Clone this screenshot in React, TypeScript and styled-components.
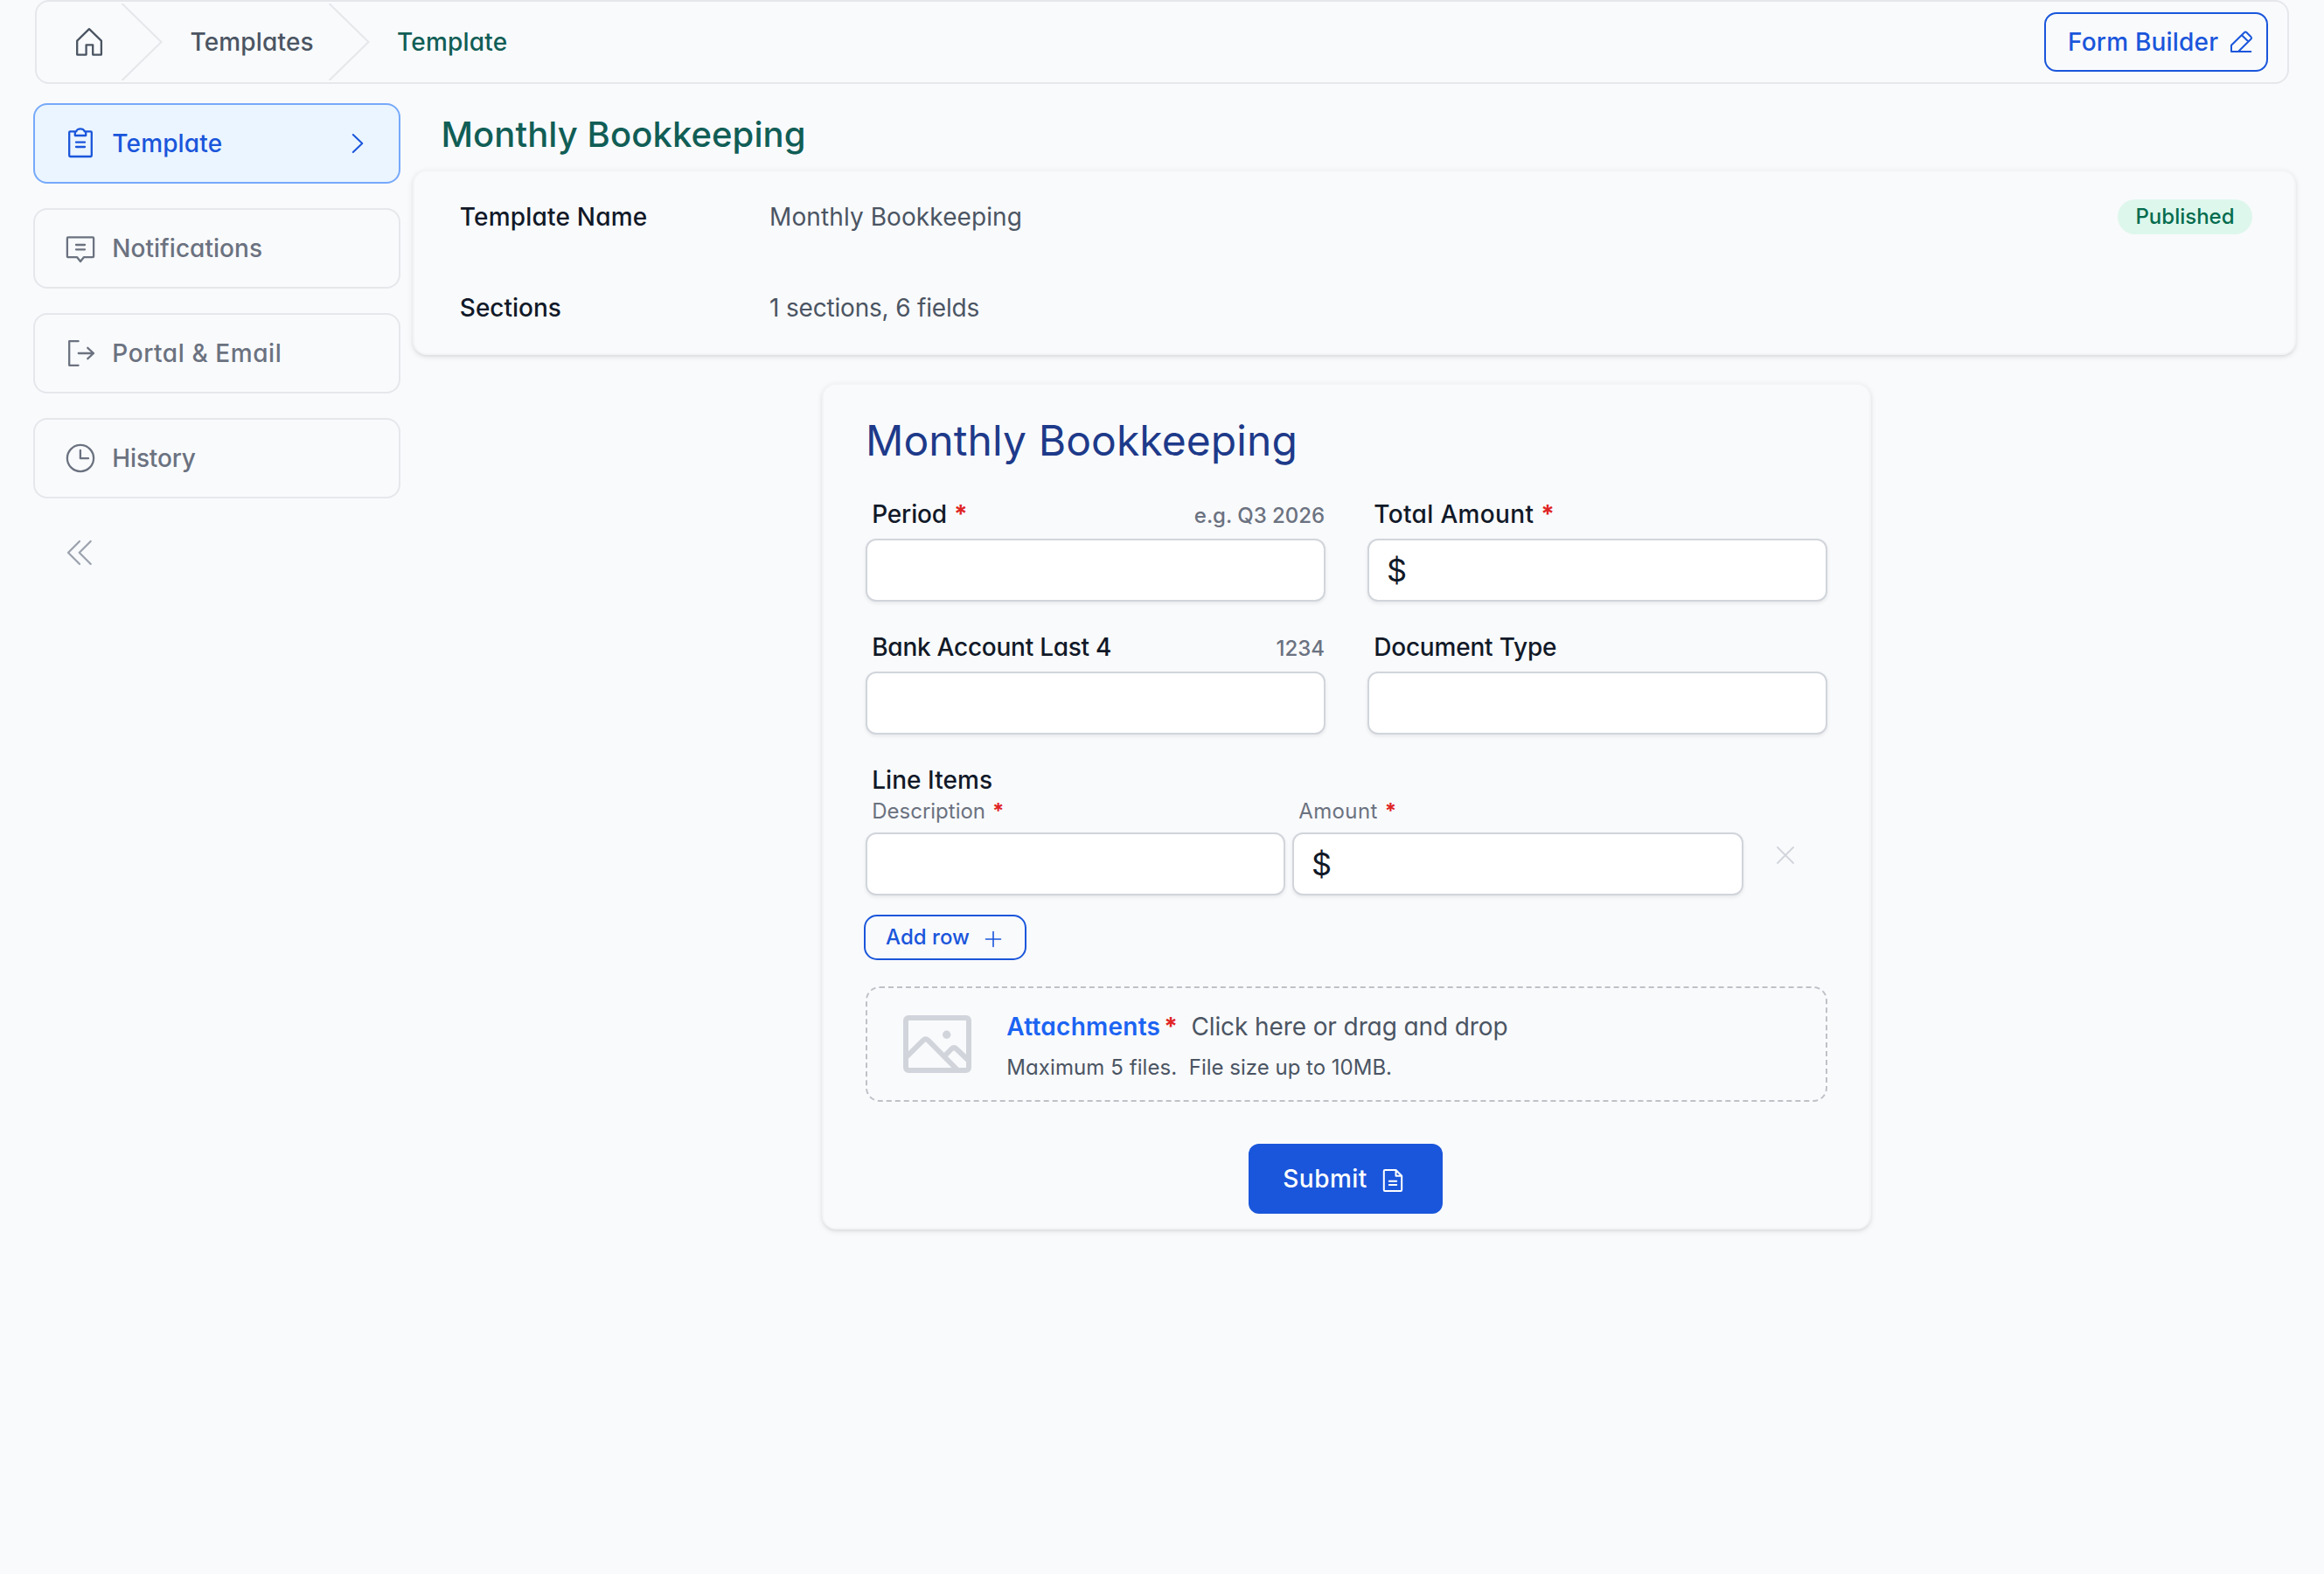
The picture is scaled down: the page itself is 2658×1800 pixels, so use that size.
import React from "react";
import styled, { createGlobalStyle, css } from "styled-components";

const GlobalStyle = createGlobalStyle`
  *, *::before, *::after { box-sizing: border-box; }
  body {
    margin: 0;
    background: #f9fafc;
    color: #111928;
    font-family: Inter, Roboto, "Liberation Sans", sans-serif;
    font-feature-settings: "cv11";
    font-size: 28px;
    line-height: 40px;
  }
`;

const strokeIcon = css`
  display: block;
  flex: none;
  fill: none;
  stroke: currentColor;
  stroke-width: 2.3;
  stroke-linecap: round;
  stroke-linejoin: round;
`;

const Icon = styled.svg<{ $nudge?: number; $stroke?: number }>`
  ${strokeIcon}
  margin-top: ${(p) => p.$nudge ?? 0}px;
  stroke-width: ${(p) => p.$stroke ?? 2.3};
`;

const Text = styled.span<{ $track?: number; $weight?: number; $small?: boolean }>`
  white-space: pre;
  font-weight: ${(p) => p.$weight ?? 500};
  letter-spacing: ${(p) => p.$track ?? 0}px;
  ${(p) => p.$small && "font-size: 24px; line-height: 32px;"}
`;

const Page = styled.div`
  min-height: 1800px;
`;

const TopBar = styled.header`
  display: flex;
  align-items: center;
  height: 96px;
  margin: 0 40px;
  padding: 0 22px 0 44px;
  border: 2px solid #e5e7eb;
  border-radius: 16px;
  color: #4b5563;
`;

const Separator = styled.svg`
  display: block;
  flex: none;
  fill: none;
  stroke: #e5e7eb;
  stroke-width: 2;
`;

const Crumb = styled.a<{ $current?: boolean }>`
  display: flex;
  width: ${(p) => (p.$current ? "auto" : "158px")};
  margin-left: 30.5px;
  color: ${(p) => (p.$current ? "#115e56" : "inherit")};
`;

const HomeLink = styled.a`
  width: 53px;
`;

const BarActions = styled.div`
  margin-left: auto;
`;

const OutlineButton = styled.button<{ $compact?: boolean }>`
  display: flex;
  align-items: center;
  gap: ${(p) => (p.$compact ? 15 : 12)}px;
  width: ${(p) => (p.$compact ? 186 : 256)}px;
  height: ${(p) => (p.$compact ? 52 : 68)}px;
  padding: 0 0 0 ${(p) => (p.$compact ? 23 : 25)}px;
  border: 2px solid #1a56db;
  border-radius: ${(p) => (p.$compact ? 15 : 14)}px;
  background: transparent;
  color: #1a56db;
  font: inherit;
  font-feature-settings: inherit;
`;

const Body = styled.div`
  display: flex;
  align-items: flex-start;
  gap: 14px;
  padding: 22px 32px 0 38px;
`;

const Sidebar = styled.nav`
  display: flex;
  flex-direction: column;
  gap: 28px;
  flex: none;
  width: 420px;
`;

const NavItem = styled.a<{ $active?: boolean }>`
  display: flex;
  align-items: center;
  gap: 18.3px;
  height: 92px;
  padding: 0 34px;
  border: 2px solid ${(p) => (p.$active ? "#76a9fa" : "#e5e7eb")};
  border-radius: 16px;
  background: ${(p) => (p.$active ? "#ebf5ff" : "transparent")};
  color: ${(p) => (p.$active ? "#1a56db" : "#6b7280")};
`;

const NavArrow = styled.svg`
  ${strokeIcon}
  margin-left: auto;
  stroke-width: 2;
`;

const Collapse = styled.button`
  display: flex;
  align-self: flex-start;
  margin: 16px 0 0 36px;
  padding: 0;
  border: 0;
  background: none;
  color: #9ca3af;
`;

const Main = styled.main`
  flex: 1;
  padding-top: 8px;
`;

const PageTitle = styled.h1`
  margin: 0 0 12px;
  padding-left: 32.5px;
  color: #115e56;
  font-size: 40px;
  font-weight: 500;
  line-height: 56px;
  letter-spacing: 0.08px;
`;

const card = css`
  border: 2px solid #f3f4f6;
  border-radius: 16px;
  background: #f9fafc;
  box-shadow: 0 2px 6px rgba(0, 0, 0, 0.1), 0 2px 4px -2px rgba(0, 0, 0, 0.1);
`;

const SummaryCard = styled.section`
  ${card}
  display: flex;
  flex-direction: column;
  gap: 64px;
  padding: 32px 48px 32px 51.8px;
`;

const SummaryRow = styled.div`
  display: grid;
  grid-template-columns: 354.3px 1fr auto;
  align-items: center;
`;

const Value = styled.div`
  color: #4b5563;
`;

const Badge = styled.span`
  display: flex;
  align-items: center;
  justify-content: center;
  width: 154px;
  height: 40px;
  border-radius: 20px;
  background: #def7ec;
  color: #046c4e;
`;

const FormArea = styled.div`
  padding-right: 18px;
`;

const FormCard = styled.form`
  ${card}
  width: 1200px;
  margin: 32px auto 0;
  padding: 32px 48px 16px;
`;

const FormTitle = styled.h2`
  margin: 0 0 32px;
  color: #1e3a8a;
  font-size: 48px;
  font-weight: 400;
  line-height: 64px;
  letter-spacing: 0.09px;
`;

const FieldGrid = styled.div`
  display: grid;
  grid-template-columns: 1fr 1fr;
  gap: 32px 48px;
  margin-bottom: 32px;
`;

const Field = styled.div<{ $width?: number }>`
  display: flex;
  flex-direction: column;
  gap: 8px;
  width: ${(p) => (p.$width ? p.$width + "px" : "auto")};
`;

const LabelRow = styled.div<{ $compact?: boolean }>`
  display: flex;
  align-items: baseline;
  justify-content: space-between;
  padding: 0 1px 0 7.2px;
  ${(p) => p.$compact && "height: 32px; font-size: 24px; line-height: 32px;"}
`;

const Star = styled.span<{ $gap?: number }>`
  margin-left: ${(p) => p.$gap ?? 8}px;
  color: #e02424;
  font-weight: 700;
`;

const Muted = styled.span`
  color: #6b7280;
`;

const InputBox = styled.div`
  display: flex;
  align-items: center;
  height: 72px;
  padding: 0 20px;
  border: 2px solid #d1d5db;
  border-radius: 12px;
  background: #fff;
  box-shadow: 0 2px 4px rgba(0, 0, 0, 0.08);
  font-size: 36px;
`;

const LineRow = styled.div`
  display: flex;
  gap: 8px;
  margin-bottom: 22px;
`;

const RemoveButton = styled.button`
  flex: 1;
  display: flex;
  justify-content: center;
  align-items: flex-start;
  margin-left: -8px;
  padding: 56px 0 0;
  border: 0;
  background: none;
  color: #d1d5db;
`;

const AddRowWrap = styled.div`
  margin: 0 0 30px -2px;
`;

const DropZone = styled.div`
  display: flex;
  align-items: center;
  gap: 40.3px;
  height: 132px;
  margin-bottom: 48px;
  padding-left: 41px;
  border: 2px dashed #bfc1c7;
  border-radius: 16px;
  color: #4b5563;
`;

const DropText = styled.div`
  display: flex;
  flex-direction: column;
  gap: 11px;
  padding-top: 3px;
`;

const DropLine = styled.div<{ $gap: number; $small?: boolean }>`
  display: flex;
  gap: ${(p) => p.$gap}px;
  height: ${(p) => (p.$small ? 32 : 40)}px;
`;

const DropTitle = styled.span`
  color: #1c64f2;
`;

const SubmitButton = styled.button`
  display: flex;
  align-items: center;
  gap: 17.5px;
  width: 222px;
  height: 80px;
  margin-left: 438px;
  padding: 0 0 0 39.3px;
  border: 0;
  border-radius: 12px;
  background: #1a56db;
  color: #fff;
  font: inherit;
  font-feature-settings: inherit;
`;

const Chevron = () => (
  <Separator width="48" height="88" viewBox="0 0 48 88">
    <path d="M0.5 0L45.5 44L0.5 88" />
  </Separator>
);

const navItems = [
  {
    label: "Template",
    track: 0.15,
    active: true,
    icon: "M12 4.3H6.2a1 1 0 0 0-1 1V32a1 1 0 0 0 1 1h23.6a1 1 0 0 0 1-1V5.3a1 1 0 0 0-1-1H24M11.8 4.3V9h12.4V4.3M11.8 4.3H13.4a4.6 3 0 0 1 9.2 0H24.2M13 16.7H23M13 22H23",
  },
  {
    label: "Notifications",
    track: 0.03,
    icon: "M14.2 28.2H3.9a1 1 0 0 1-1-1V6.4a1 1 0 0 1 1-1h28.2a1 1 0 0 1 1 1v20.8a1 1 0 0 1-1 1H21.8L18 33ZM13 14H23M13 19.3H23",
  },
  {
    label: "Portal & Email",
    track: 0.57,
    icon: "M15.6 4.2H5.2V31.8H15.6M15.8 18H33M26.3 11.8L33 18L26.3 24.2",
  },
  {
    label: "History",
    track: -0.15,
    icon: "M33.1 18a15.1 15.1 0 1 1-30.2 0a15.1 15.1 0 1 1 30.2 0M17.9 9V18.2H27",
  },
];

export default function App() {
  return (
    <>
      <GlobalStyle />
      <Page>
        <TopBar>
          <HomeLink>
            <Icon width="32" height="34" viewBox="0 0 32 34">
              <path d="M2.2 15.6L16 2.2L29.9 15.6V31.6H20.2V20.4H12.6V31.6H2.2Z" />
            </Icon>
          </HomeLink>
          <Chevron />
          <Crumb>
            <Text $track={0.15}>Templates</Text>
          </Crumb>
          <Chevron />
          <Crumb $current>
            <Text $track={0.2}>Template</Text>
          </Crumb>
          <BarActions>
            <OutlineButton>
              <Text $track={0.2}>Form Builder</Text>
              <Icon width="28" height="28" viewBox="0 0 28 28" $stroke={2}>
                <path d="M25.3 25H3V17.8L17.8 3.2Q19.2 1.9 20.6 3.2L25.6 8.3Q26.6 9.4 25.6 10.5L11 25M15 6.2L22.2 13.2" />
              </Icon>
            </OutlineButton>
          </BarActions>
        </TopBar>
        <Body>
          <Sidebar>
            {navItems.map((item) => (
              <NavItem key={item.label} $active={item.active}>
                <Icon width="36" height="36" viewBox="0 0 36 36">
                  <path d={item.icon} />
                </Icon>
                <Text $track={item.track}>{item.label}</Text>
                {item.active && (
                  <NavArrow width="20" height="24" viewBox="0 0 20 24">
                    <path d="M1.8 2L12.3 12L1.8 22" />
                  </NavArrow>
                )}
              </NavItem>
            ))}
            <Collapse>
              <Icon width="36" height="36" viewBox="0 0 36 36">
                <path d="M17 5L4 18L17 31M29.7 5L16.7 18L29.7 31" />
              </Icon>
            </Collapse>
          </Sidebar>
          <Main>
            <PageTitle>Monthly Bookkeeping</PageTitle>
            <SummaryCard>
              <SummaryRow>
                <Text $track={0.2}>Template Name</Text>
                <Value>
                  <Text $weight={400} $track={0.09}>Monthly Bookkeeping</Text>
                </Value>
                <Badge>
                  <Text $small>Published</Text>
                </Badge>
              </SummaryRow>
              <SummaryRow>
                <Text>Sections</Text>
                <Value>
                  <Text $weight={400} $track={-0.19}>1 sections, 6 fields</Text>
                </Value>
              </SummaryRow>
            </SummaryCard>
            <FormArea>
              <FormCard>
                <FormTitle>Monthly Bookkeeping</FormTitle>
                <FieldGrid>
                  <Field>
                    <LabelRow>
                      <div>
                        <Text $track={-0.15}>Period</Text>
                        <Star>*</Star>
                      </div>
                      <Muted>
                        <Text $small $weight={450} $track={-0.05}>e.g. Q3 2026</Text>
                      </Muted>
                    </LabelRow>
                    <InputBox />
                  </Field>
                  <Field>
                    <LabelRow>
                      <div>
                        <Text $track={0.35}>Total Amount</Text>
                        <Star>*</Star>
                      </div>
                    </LabelRow>
                    <InputBox>$</InputBox>
                  </Field>
                  <Field>
                    <LabelRow>
                      <Text $track={-0.25}>Bank Account Last 4</Text>
                      <Muted>
                        <Text $small $weight={450}>1234</Text>
                      </Muted>
                    </LabelRow>
                    <InputBox />
                  </Field>
                  <Field>
                    <LabelRow>
                      <Text $track={-0.2}>Document Type</Text>
                    </LabelRow>
                    <InputBox />
                  </Field>
                </FieldGrid>
                <LabelRow>
                  <Text $track={0.05}>Line Items</Text>
                </LabelRow>
                <LineRow>
                  <Field $width={480}>
                    <LabelRow $compact>
                      <Muted>
                        <Text $weight={400}>Description</Text>
                        <Star>*</Star>
                      </Muted>
                    </LabelRow>
                    <InputBox />
                  </Field>
                  <Field $width={516}>
                    <LabelRow $compact>
                      <Muted>
                        <Text $weight={400} $track={0.4}>Amount</Text>
                        <Star>*</Star>
                      </Muted>
                    </LabelRow>
                    <InputBox>$</InputBox>
                  </Field>
                  <RemoveButton type="button">
                    <Icon width="20" height="20" viewBox="0 0 20 20" $stroke={1.8}>
                      <path d="M1 1L19 19M19 1L1 19" />
                    </Icon>
                  </RemoveButton>
                </LineRow>
                <AddRowWrap>
                  <OutlineButton type="button" $compact>
                    <Text $small $track={0.05}>Add row</Text>
                    <Icon width="24" height="24" viewBox="0 0 24 24" $stroke={1.6} $nudge={4}>
                      <path d="M12 3.5V20.5M3.5 12H20.5" />
                    </Icon>
                  </OutlineButton>
                </AddRowWrap>
                <DropZone>
                  <Icon width="78" height="66" viewBox="0 0 78 66" color="#d1d5db" $stroke={6}>
                    <rect x="3" y="3" width="72" height="60" rx="3" />
                    <path
                      strokeLinecap="butt"
                      d="M4 47.3L22.9 28.6Q25.7 26 28.5 28.6L62 62.5M47.5 46.5L55.2 38.5Q58 36 60.8 38.5L74 51"
                    />
                    <circle cx="49.7" cy="22.3" r="4.7" fill="currentColor" stroke="none" />
                  </Icon>
                  <DropText>
                    <DropLine $gap={15.5}>
                      <DropTitle>
                        <Text $weight={600} $track={0.25}>Attachments</Text>
                        <Star $gap={4}>*</Star>
                      </DropTitle>
                      <Text $weight={400} $track={-0.1}>Click here or drag and drop</Text>
                    </DropLine>
                    <DropLine $gap={13.5} $small>
                      <Text $small $weight={400} $track={0.08}>Maximum 5 files.</Text>
                      <Text $small $weight={400}>File size up to 10MB.</Text>
                    </DropLine>
                  </DropText>
                </DropZone>
                <SubmitButton type="button">
                  <Text $track={0.45}>Submit</Text>
                  <Icon width="24" height="28" viewBox="0 0 24 28" $stroke={2} $nudge={4}>
                    <path d="M15.5 2H3a1.2 1.2 0 0 0-1.2 1.2V24.8A1.2 1.2 0 0 0 3 26H21a1.2 1.2 0 0 0 1.2-1.2V8.8ZM15.5 2V8.8H22.2M7.8 14.7H16.2M7.8 19H16.2" />
                  </Icon>
                </SubmitButton>
              </FormCard>
            </FormArea>
          </Main>
        </Body>
      </Page>
    </>
  );
}
